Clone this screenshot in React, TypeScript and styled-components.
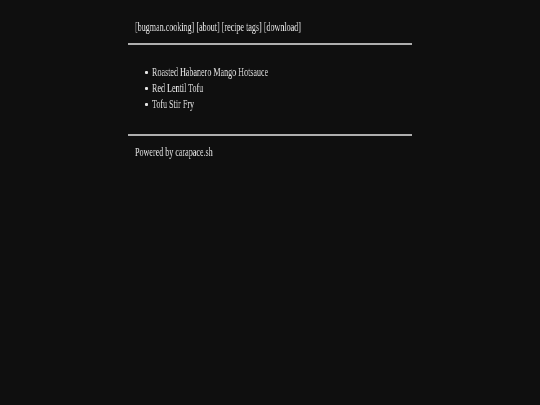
import React from "react";
import styled, { createGlobalStyle } from "styled-components";

const GlobalStyle = createGlobalStyle`
	html, body {
		margin: 0;
		padding: 0;
		background: #0f0f0f;
	}
	body {
		min-height: 405px;
		color: #e4e4e4;
		font-family: "Liberation Serif", "Times New Roman", serif;
		font-size: 13px;
		line-height: 16px;
	}
`;

const Page = styled.div`
	width: 284px;
	margin-left: calc(50% - 142px);
	padding-top: 19px;
`;

const Nav = styled.nav`
	padding-left: 7px;
	height: 16px;
`;

// the reference type is a narrow serif; squeeze Times sideways to match it
const Narrow = styled.span`
	display: inline-block;
	white-space: nowrap;
	transform: scaleX(0.62);
	transform-origin: left center;
	will-change: transform;
`;

const NavLink = styled.a`
	color: inherit;
	text-decoration: none;
`;

const Rule = styled.hr<{ gap: number }>`
	border: none;
	height: 2px;
	margin: ${(props) => props.gap}px 0 0;
	background: #aeaeae;
`;

const RecipeList = styled.ul`
	list-style: none;
	margin: 19px 0 22px;
	padding: 0 0 0 17px;
`;

const Recipe = styled.li`
	display: flex;
	align-items: center;
	gap: 4px;
	height: 16px;

	&::before {
		content: "";
		flex: none;
		width: 3px;
		height: 3px;
		border-radius: 1px;
		background: #e4e4e4;
	}
`;

const Footer = styled.footer`
	padding: 8px 0 0 7px;
	height: 16px;
`;

export default function App() {
	const links = ["bugman.cooking", "about", "recipe tags", "download"];
	const recipes = ["Roasted Habanero Mango Hotsauce", "Red Lentil Tofu", "Tofu Stir Fry"];

	return (
		<>
			<GlobalStyle />
			<Page>
				<Nav>
					<Narrow>
						{links.map((each, i) => (
							<React.Fragment key={i}>
								{i > 0 && " "}
								<NavLink href="#">[{each}]</NavLink>
							</React.Fragment>
						))}
					</Narrow>
				</Nav>
				<Rule gap={8} />
				<RecipeList>
					{recipes.map((each, i) => (
						<Recipe key={i}>
							<Narrow>{each}</Narrow>
						</Recipe>
					))}
				</RecipeList>
				<Rule gap={0} />
				<Footer>
					<Narrow>Powered by carapace.sh</Narrow>
				</Footer>
			</Page>
		</>
	);
}
